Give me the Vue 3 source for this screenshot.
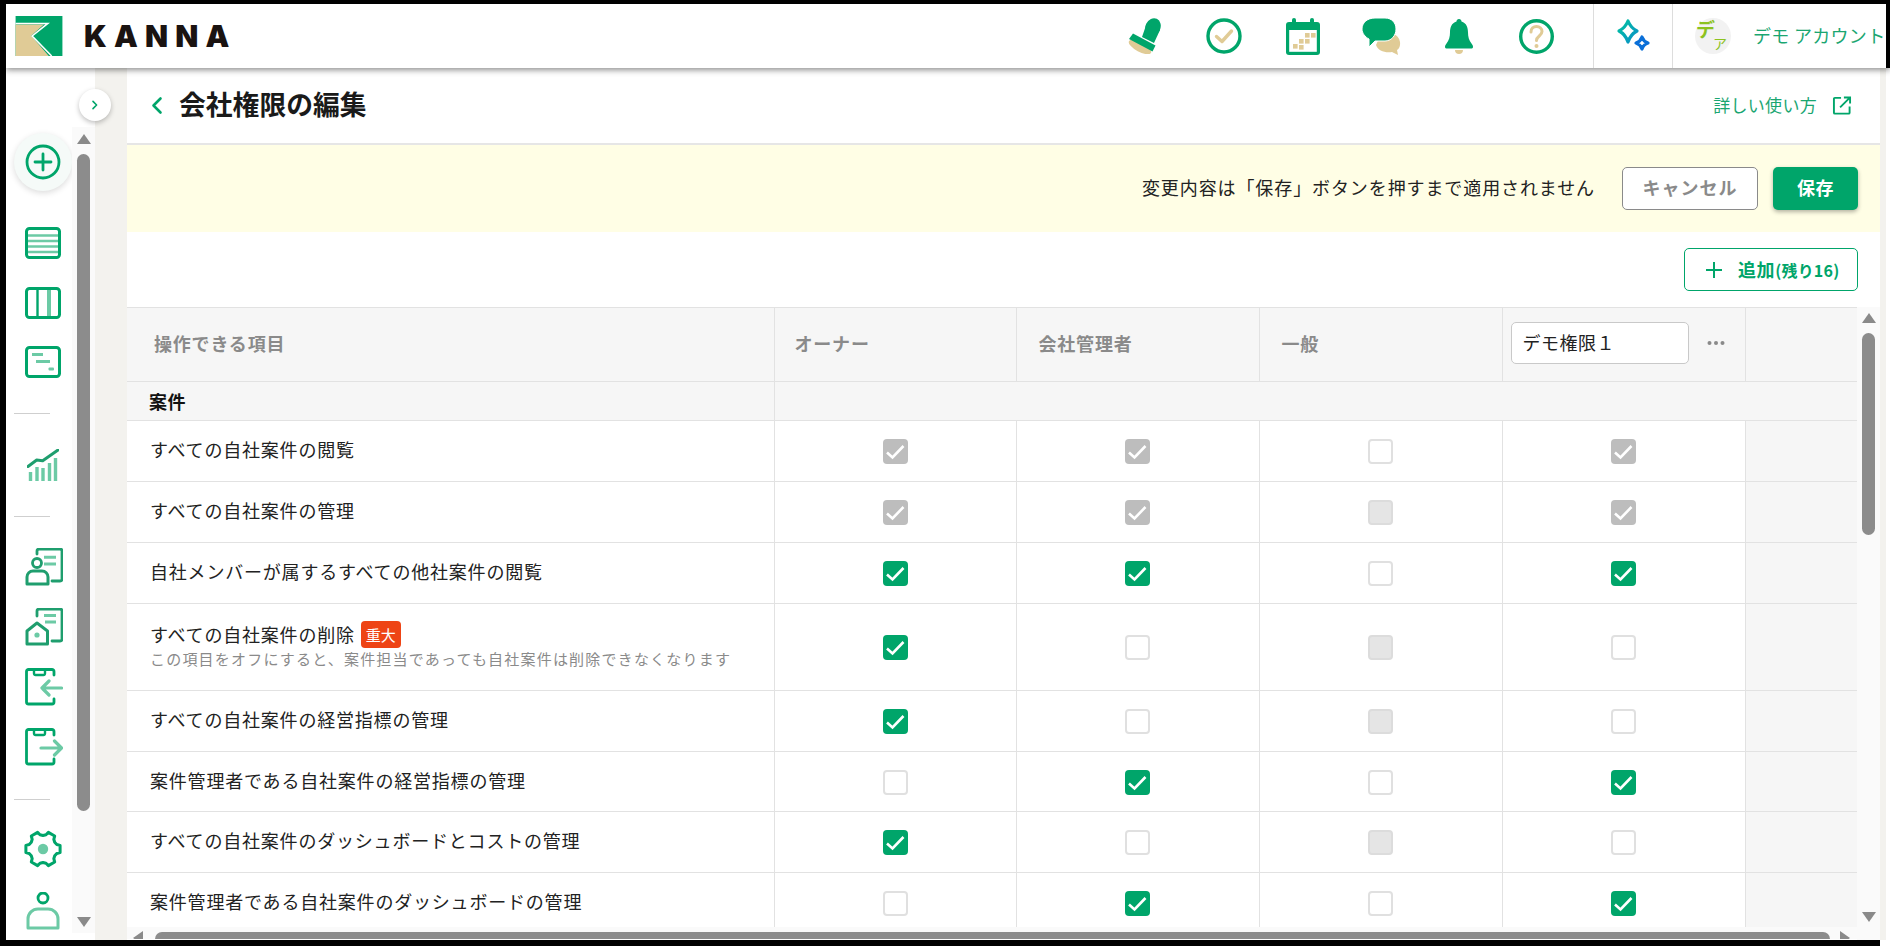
<template>
  <div class="app">
    <header class="header">
      <svg class="logo" viewBox="0 0 48 41" width="48" height="40">
        <rect width="48" height="41" fill="#00a56a" />
        <polygon points="0,8.7 29,8.7 16,20.3 34,41 0,41" fill="#e0cb96" />
        <polyline points="0,7.6 33,7.6 17,20.5 37,41" fill="none" stroke="#fff" stroke-width="1.6" />
      </svg>
      <span class="brand">KANNA</span>
      <div class="header-icons">
        <svg viewBox="0 0 34 36" width="34" height="36">
          <ellipse cx="12" cy="29" rx="12.5" ry="4.800" transform="rotate(28 12 29)" fill="#e0cb96" />
          <ellipse cx="25" cy="9" rx="7.500" ry="9" transform="rotate(25 25 9)" fill="#00a56a" />
          <polygon points="18.500,6 32,12 26,25 14,19" fill="#00a56a" />
          <polygon points="1,21 5,15.500 27.500,27.500 24.500,33.500" fill="#00a56a" />
        </svg>
        <svg class="i-check" viewBox="0 0 36 36" width="36" height="36">
          <circle cx="18" cy="18" r="16" fill="none" stroke="#00a56a" stroke-width="3.400" />
          <polyline points="10.500,18.500 16,23.500 25.500,13" fill="none" stroke="#e0cb96" stroke-width="3.400" stroke-linecap="round" stroke-linejoin="round" />
        </svg>
        <svg class="i-cal" viewBox="0 0 34 37" width="34" height="37">
          <rect x="0" y="4" width="34" height="33" rx="3" fill="#00a56a" />
          <rect x="6" y="0" width="4" height="7" rx="2" fill="#00a56a" />
          <rect x="24" y="0" width="4" height="7" rx="2" fill="#00a56a" />
          <rect x="3.200" y="12" width="27.600" height="21.800" fill="#fff" />
          <rect x="19" y="15" width="4.600" height="4.600" fill="#e0cb96" />
          <rect x="25" y="15" width="4.600" height="4.600" fill="#e0cb96" />
          <rect x="13" y="21" width="4.600" height="4.600" fill="#e0cb96" />
          <rect x="19" y="21" width="4.600" height="4.600" fill="#e0cb96" />
          <rect x="7" y="26" width="4.600" height="4.600" fill="#e0cb96" />
          <rect x="13" y="27" width="4.600" height="4.600" fill="#e0cb96" />
        </svg>
        <svg class="i-chat" viewBox="0 0 39 37" width="39" height="37">
          <path d="M20 14c8 0 17 2 18 10 .5 4-1 7-3 8l1 5-6-3c-7 1-14-1-16-7z" fill="#e0cb96" />
          <path d="M13 0h10c7 0 11 5 11 11 0 7-5 12-11 12H13l-6 6v-8C3 19 0 15 0 11 0 5 5 0 13 0z" fill="#00a56a" stroke="#fff" stroke-width="1" />
        </svg>
        <svg class="i-bell" viewBox="0 0 28 35" width="28" height="35">
          <path d="M14 0c1.500 0 2.500 1 2.500 2.500 5 1.500 6.500 6 6.500 11 0 4 1 8 3.500 11 1 1.500 1.500 2 1.500 3.500 0 1-1 1.500-2 1.500H2c-1 0-2-.5-2-1.500 0-1.500.5-2 1.500-3.500C4 21.500 5 17.500 5 13.500c0-5 1.500-9.500 6.500-11C11.500 1 12.500 0 14 0z" fill="#00a56a" />
          <path d="M10 31h8c0 2.500-1.500 4-4 4s-4-1.500-4-4z" fill="#e0cb96" />
        </svg>
        <svg class="i-help" viewBox="0 0 35 35" width="35" height="35">
          <circle cx="17.500" cy="17.500" r="15.800" fill="none" stroke="#00a56a" stroke-width="3.400" />
          <path d="M12 13c0-3.500 2.500-5.500 5.500-5.500s5.500 2 5.500 5c0 4.500-5.500 4.500-5.500 9" fill="none" stroke="#e0cb96" stroke-width="3" stroke-linecap="round" />
          <circle cx="17.500" cy="27" r="2" fill="#e0cb96" />
        </svg>
      </div>
      <div class="sparkle-cell">
        <svg viewBox="0 0 36 36" width="36" height="36">
          <defs>
            <linearGradient id="sp1" x1="0" y1="0" x2="1" y2="1">
              <stop offset="0" stop-color="#00c2a0" />
              <stop offset="1" stop-color="#0a8fc8" />
            </linearGradient>
          </defs>
          <path d="M13 3c2 5 5 8 9 10-4 2-7 5-9 11-2-6-5-9-9-11 4-2 7-5 9-10z" fill="none" stroke="url(#sp1)" stroke-width="3.200" stroke-linejoin="round" />
          <path d="M27 19c1 3 3 5 6 6-3 1-5 3-6 6-1-3-3-5-6-6 3-1 5-3 6-6z" fill="none" stroke="#0a6fd8" stroke-width="3.200" stroke-linejoin="round" />
        </svg>
      </div>
      <div class="account">
        <div class="avatar">
          <span class="avatar-a">デ</span>
          <span class="avatar-b">ア</span>
        </div>
        <span class="account-name">デモ アカウント</span>
      </div>
    </header>

    <div class="body">
      <button class="toggle">
        <svg viewBox="0 0 10 12" width="8" height="10">
          <polyline points="2.500,1.500 7,6 2.500,10.500" fill="none" stroke="#00a56a" stroke-width="2" stroke-linecap="round" stroke-linejoin="round" />
        </svg>
      </button>

      <nav class="nav">
        <div class="add-btn">
          <svg viewBox="0 0 36 36" width="36" height="36">
            <circle cx="18" cy="18" r="16" fill="none" stroke="#00a56a" stroke-width="2.800" />
            <path d="M18 10v16M10 18h16" fill="none" stroke="#00a56a" stroke-width="2.800" stroke-linecap="round" />
          </svg>
        </div>

        <div class="nav-group first">
          <svg viewBox="0 0 36 32" width="36" height="32">
            <path d="M3 8.500h30M3 14h30M3 19.500h30M3 25h30" stroke="#6ccaa5" stroke-width="2.600" fill="none" />
            <rect x="1.500" y="1.500" width="33" height="29" rx="3" fill="none" stroke="#00a56a" stroke-width="3" />
          </svg>
          <svg viewBox="0 0 36 32" width="36" height="32">
            <path d="M12.500 3v26" stroke="#00a56a" stroke-width="2.400" fill="none" />
            <path d="M24 3v26" stroke="#6ccaa5" stroke-width="4" fill="none" />
            <rect x="1.500" y="1.500" width="33" height="29" rx="3" fill="none" stroke="#00a56a" stroke-width="3" />
          </svg>
          <svg viewBox="0 0 36 32" width="36" height="32">
            <rect x="7" y="7" width="11" height="3" fill="#6ccaa5" />
            <rect x="11" y="14" width="14" height="3" fill="#6ccaa5" />
            <rect x="23.500" y="21.500" width="5.500" height="3" rx="1" fill="#6ccaa5" />
            <rect x="1.500" y="1.500" width="33" height="29" rx="3" fill="none" stroke="#00a56a" stroke-width="3" />
          </svg>
        </div>

        <div class="nav-divider"></div>

        <svg class="nav-chart" viewBox="0 0 32 32" width="32" height="32">
          <path d="M3.500 23v9M10 18v14M16 19v13M22.500 14v18M28.500 9v23" fill="none" stroke="#6ccaa5" stroke-width="3.400" />
          <polyline points="1,17.500 9.700,11 15.700,11.700 31,1" fill="none" stroke="#1f9e6e" stroke-width="3" stroke-linecap="round" stroke-linejoin="round" />
        </svg>

        <div class="nav-divider"></div>

        <div class="nav-group second">
          <svg viewBox="0 0 38 38" width="38" height="38">
            <path d="M12 6V3a2 2 0 0 1 2-2h21a2 2 0 0 1 2 2v28a2 2 0 0 1-2 2h-8" fill="none" stroke="#1f9e6e" stroke-width="2.800" stroke-linecap="round" />
            <path d="M19 9.300h12M19 16h12" fill="none" stroke="#6ccaa5" stroke-width="3" />
            <circle cx="12" cy="15" r="4.500" fill="none" stroke="#1f9e6e" stroke-width="2.800" />
            <path d="M2 36v-7a6 6 0 0 1 6-6h9a6 6 0 0 1 6 6v7z" fill="none" stroke="#1f9e6e" stroke-width="3" stroke-linejoin="round" />
          </svg>
          <svg viewBox="0 0 38 38" width="38" height="38">
            <path d="M12 8V3a2 2 0 0 1 2-2h21a2 2 0 0 1 2 2v28a2 2 0 0 1-2 2h-8" fill="none" stroke="#1f9e6e" stroke-width="2.800" stroke-linecap="round" />
            <path d="M19 7.500h12M20 14h11" fill="none" stroke="#6ccaa5" stroke-width="3" />
            <path d="M2 36V23l10-8 10.500 8v13z" fill="none" stroke="#1f9e6e" stroke-width="3" stroke-linejoin="round" />
            <circle cx="12" cy="27" r="2.600" fill="#6ccaa5" />
          </svg>
          <svg viewBox="0 0 38 38" width="38" height="38">
            <path d="M29 7V3.500a2 2 0 0 0-2-2H3.500a2 2 0 0 0-2 2V34a2 2 0 0 0 2 2H27a2 2 0 0 0 2-2v-3" fill="none" stroke="#00a56a" stroke-width="2.800" stroke-linecap="round" />
            <path d="M9 2v3.500a1.500 1.500 0 0 0 1.500 1.500h8a1.500 1.500 0 0 0 1.500-1.500V2" fill="none" stroke="#00a56a" stroke-width="2.400" />
            <path d="M36.500 20H17M24 13l-7 7 7 7" fill="none" stroke="#6ccaa5" stroke-width="3.200" stroke-linecap="round" stroke-linejoin="round" />
          </svg>
          <svg viewBox="0 0 38 38" width="38" height="38">
            <path d="M29 7V3.500a2 2 0 0 0-2-2H3.500a2 2 0 0 0-2 2V34a2 2 0 0 0 2 2H27a2 2 0 0 0 2-2v-3" fill="none" stroke="#00a56a" stroke-width="2.800" stroke-linecap="round" />
            <path d="M9 2v3.500a1.500 1.500 0 0 0 1.500 1.500h8a1.500 1.500 0 0 0 1.500-1.500V2" fill="none" stroke="#00a56a" stroke-width="2.400" />
            <path d="M16 20h20M29.500 13l7 7-7 7" fill="none" stroke="#6ccaa5" stroke-width="3.200" stroke-linecap="round" stroke-linejoin="round" />
          </svg>
        </div>

        <div class="nav-divider last"></div>

        <svg class="nav-gear" viewBox="0 0 38 38" width="38" height="38">
          <path :d="gearPath" fill="none" stroke="#00a56a" stroke-width="3" stroke-linejoin="round" />
          <circle cx="19" cy="19" r="5.200" fill="#6ccaa5" />
        </svg>

        <svg class="nav-person" viewBox="0 0 34 38" width="34" height="38">
          <circle cx="17" cy="6" r="5" fill="none" stroke="#00a56a" stroke-width="2.800" />
          <path d="M2 36v-9a10 10 0 0 1 10-10h10a10 10 0 0 1 10 10v9z" fill="none" stroke="#6ccaa5" stroke-width="3" stroke-linejoin="round" />
        </svg>
      </nav>

      <div class="nav-scroll">
        <div class="nav-track">
          <span class="arrow-up"></span>
          <span class="nav-thumb"></span>
          <span class="arrow-down"></span>
        </div>
      </div>
      <div class="gutter"></div>

      <main class="main">
        <div class="title-bar">
          <svg class="back" viewBox="0 0 12 18" width="12" height="19">
            <polyline points="9.500,2 2.500,9 9.500,16" fill="none" stroke="#00a56a" stroke-width="2.600" stroke-linecap="round" stroke-linejoin="round" />
          </svg>
          <h1 class="title">会社権限の編集</h1>
          <a class="help-link">詳しい使い方</a>
          <svg class="ext" viewBox="0 0 20 20" width="20" height="19">
            <path d="M9 2H2.500a1 1 0 0 0-1 1v14.500a1 1 0 0 0 1 1H17a1 1 0 0 0 1-1V11" fill="none" stroke="#00a56a" stroke-width="2" />
            <path d="M8 12L18 2M12 1.500h6.500V8" fill="none" stroke="#00a56a" stroke-width="2" />
          </svg>
        </div>

        <div class="notice">
          <span class="notice-text">変更内容は「保存」ボタンを押すまで適用されません</span>
          <button class="btn-cancel">キャンセル</button>
          <button class="btn-save">保存</button>
        </div>

        <div class="toolbar">
          <button class="btn-add">
            <svg viewBox="0 0 18 18" width="18" height="18">
              <path d="M9 1v16M1 9h16" stroke="#00a56a" stroke-width="2" fill="none" />
            </svg>
            <span class="add-label">追加<small>(残り16)</small></span>
          </button>
        </div>

        <div class="table-area">
          <div class="table-col">
            <div class="table-scroll">
              <table class="perm-table">
                <colgroup>
                  <col style="width: 647px" />
                  <col style="width: 242px" />
                  <col style="width: 243px" />
                  <col style="width: 243px" />
                  <col style="width: 243px" />
                  <col />
                </colgroup>
                <thead>
                  <tr class="head-row">
                    <th class="th-first">操作できる項目</th>
                    <th>オーナー</th>
                    <th class="th-wide">会社管理者</th>
                    <th class="th-wide">一般</th>
                    <th class="th-edit">
                      <div class="edit-wrap">
                        <input class="role-input" value="デモ権限１" />
                        <svg viewBox="0 0 18 4" width="18" height="4">
                          <circle cx="2.500" cy="2" r="2" fill="#8a8a8a" />
                          <circle cx="9" cy="2" r="2" fill="#8a8a8a" />
                          <circle cx="15.500" cy="2" r="2" fill="#8a8a8a" />
                        </svg>
                      </div>
                    </th>
                    <th class="th-blank"></th>
                  </tr>
                </thead>
                <tbody>
                  <tr class="section-row">
                    <td class="section-name">案件</td>
                    <td colspan="5"></td>
                  </tr>
                  <tr v-for="row in rows" :key="row.label" :style="{ height: row.h + 'px' }">
                    <td class="label-cell">
                      <div class="label">
                        {{ row.label }}<span v-if="row.badge" class="badge">{{ row.badge }}</span>
                      </div>
                      <div v-if="row.note" class="note">{{ row.note }}</div>
                    </td>
                    <td v-for="(c, i) in row.checks" :key="i" class="check-cell">
                      <span class="check" :class="c">
                        <svg v-if="c === 'on' || c === 'off-on'" viewBox="0 0 25 25" width="25" height="25">
                          <polyline points="4,13.500 9.500,18.500 20.500,7" fill="none" stroke="#fff" stroke-width="2.600" />
                        </svg>
                      </span>
                    </td>
                    <td class="blank-cell"></td>
                  </tr>
                </tbody>
              </table>
            </div>
            <div class="hbar">
              <span class="arrow-left"></span>
              <span class="hbar-thumb"></span>
              <span class="arrow-right"></span>
            </div>
          </div>
          <div class="vbar">
            <span class="arrow-up"></span>
            <span class="vbar-thumb"></span>
            <span class="arrow-down"></span>
          </div>
        </div>
      </main>
      <div class="edge"></div>
    </div>
    <div class="frame-bottom"></div>
  </div>
</template>

<script setup>
// g = グレー表示のチェック済み, e = 未チェック, d = 無効
const G = 'off-on'
const O = 'on'
const E = 'empty'
const D = 'disabled'

const rows = [
  { label: 'すべての自社案件の閲覧', h: 61, checks: [G, G, E, G] },
  { label: 'すべての自社案件の管理', h: 61, checks: [G, G, D, G] },
  { label: '自社メンバーが属するすべての他社案件の閲覧', h: 61, checks: [O, O, E, O] },
  {
    label: 'すべての自社案件の削除',
    h: 87,
    badge: '重大',
    note: 'この項目をオフにすると、案件担当であっても自社案件は削除できなくなります',
    checks: [O, E, D, E]
  },
  { label: 'すべての自社案件の経営指標の管理', h: 61, checks: [O, E, D, E] },
  { label: '案件管理者である自社案件の経営指標の管理', h: 60, checks: [E, O, E, O] },
  { label: 'すべての自社案件のダッシュボードとコストの管理', h: 61, checks: [O, E, D, E] },
  { label: '案件管理者である自社案件のダッシュボードの管理', h: 61, checks: [E, O, E, O] }
]

// 歯車アイコンのアウトラインを計算で作る
function makeGear() {
  let d = ''
  const teeth = 6
  for (let i = 0; i < teeth; i++) {
    const a = (i / teeth) * Math.PI * 2
    const step = (Math.PI * 2) / teeth
    const pts = [
      [13.5, a - step * 0.5],
      [14.5, a - step * 0.3],
      [17.5, a - step * 0.2],
      [17.5, a + step * 0.2],
      [14.5, a + step * 0.3]
    ]
    pts.forEach(([r, t], j) => {
      const x = (19 + r * Math.cos(t)).toFixed(1)
      const y = (19 + r * Math.sin(t)).toFixed(1)
      d += `${i === 0 && j === 0 ? 'M' : 'L'}${x} ${y}`
    })
  }
  return d + 'Z'
}
const gearPath = makeGear()
</script>

<style>
html,
body {
  margin: 0;
  background: #fff;
}
</style>

<style scoped>
.app {
  width: 1890px;
  height: 946px;
  box-sizing: border-box;
  border-top: 4px solid #000;
  border-left: 6px solid #000;
  background: #fff;
  display: flex;
  flex-direction: column;
  overflow: hidden;
  font-family: "Noto Sans CJK JP", "Noto Sans", sans-serif;
  color: #222;
}
.header {
  height: 64px;
  flex-shrink: 0;
  box-sizing: border-box;
  border-right: 4px solid #000;
  display: flex;
  align-items: center;
  padding-left: 9px;
  background: #fff;
  box-shadow: 0 2px 6px rgba(0, 0, 0, 0.45);
  position: relative;
  z-index: 2;
}
.logo {
  margin-bottom: 1px;
}
.brand {
  margin-left: 21px;
  font-family: Inter, "Liberation Sans", sans-serif;
  font-weight: 900;
  font-size: 30px;
  letter-spacing: 7.2px;
  color: #1a1311;
}
.header-icons {
  margin-left: auto;
  display: flex;
  align-items: center;
  margin-right: 39px;
}
.i-check,
.i-cal,
.i-bell {
  margin-left: 44px;
}
.i-chat {
  margin-left: 42px;
}
.i-help {
  margin-left: 46px;
}
.sparkle-cell {
  width: 80px;
  height: 64px;
  box-sizing: border-box;
  border-left: 1px solid #ddd;
  border-right: 1px solid #ddd;
  display: flex;
  align-items: center;
  justify-content: center;
}
.account {
  width: 213px;
  height: 64px;
  overflow: hidden;
  display: flex;
  align-items: center;
  padding-left: 22px;
  box-sizing: border-box;
  flex-shrink: 0;
}
.avatar {
  width: 36px;
  height: 36px;
  flex-shrink: 0;
  border-radius: 50%;
  background: #f2f2f2;
  position: relative;
  color: #8cc21f;
  line-height: 1;
}
.avatar-a {
  position: absolute;
  left: 1px;
  top: 1px;
  font-size: 19px;
  font-weight: 700;
}
.avatar-b {
  position: absolute;
  left: 18px;
  top: 18px;
  font-size: 14px;
}
.account-name {
  margin-left: 22px;
  margin-bottom: 2px;
  font-size: 18px;
  white-space: nowrap;
  color: #1aa671;
  letter-spacing: 0.3px;
}

.body {
  flex: 1;
  display: flex;
  min-height: 0;
  position: relative;
}
.toggle {
  position: absolute;
  left: 73px;
  top: 21px;
  width: 32px;
  height: 32px;
  padding: 0;
  border: 0;
  border-radius: 50%;
  background: #fff;
  box-shadow: 0 2px 5px rgba(0, 0, 0, 0.25);
  display: flex;
  align-items: center;
  justify-content: center;
  z-index: 1;
}
.nav {
  width: 66px;
  flex-shrink: 0;
  box-sizing: border-box;
  padding-top: 65px;
  padding-left: 8px;
  background: #fff;
}
.add-btn {
  width: 58px;
  height: 58px;
  border-radius: 50%;
  background: #f5faf8;
  box-shadow: 0 2px 6px rgba(0, 0, 0, 0.14);
  display: flex;
  align-items: center;
  justify-content: center;
}
.nav-group {
  display: flex;
  flex-direction: column;
  margin-left: 11px;
}
.nav-group.first {
  margin-top: 36px;
  gap: 27.5px;
}
.nav-group.second {
  margin-top: 31px;
  gap: 22px;
}
.nav-divider {
  width: 36px;
  height: 1px;
  background: #cfcfcf;
  margin-top: 35px;
}
.nav-divider.last {
  margin-top: 33px;
}
.nav-chart {
  display: block;
  margin: 35px 0 0 13px;
}
.nav-gear {
  display: block;
  margin: 30px 0 0 10px;
}
.nav-person {
  display: block;
  margin: 24px 0 0 12px;
}
.nav-scroll {
  width: 23px;
  flex-shrink: 0;
  padding-top: 59px;
  box-sizing: border-box;
  background: #fff;
}
.nav-track {
  height: 806px;
  background: #fafafa;
  display: flex;
  flex-direction: column;
  align-items: center;
  padding-top: 7px;
  padding-bottom: 6px;
  box-sizing: border-box;
}
.nav-thumb {
  width: 13px;
  height: 657px;
  margin-top: 10px;
  border-radius: 7px;
  background: #8c8c8c;
}
.nav-track .arrow-down {
  margin-top: auto;
}
.arrow-up {
  width: 0;
  height: 0;
  border-left: 7.5px solid transparent;
  border-right: 7.5px solid transparent;
  border-bottom: 10px solid #8a8a8a;
}
.arrow-down {
  width: 0;
  height: 0;
  border-left: 7.5px solid transparent;
  border-right: 7.5px solid transparent;
  border-top: 10px solid #8a8a8a;
}
.arrow-left {
  width: 0;
  height: 0;
  margin-top: 4px;
  flex-shrink: 0;
  border-top: 7.5px solid transparent;
  border-bottom: 7.5px solid transparent;
  border-right: 10px solid #8a8a8a;
}
.arrow-right {
  width: 0;
  height: 0;
  margin-top: 4px;
  flex-shrink: 0;
  border-top: 7.5px solid transparent;
  border-bottom: 7.5px solid transparent;
  border-left: 10px solid #8a8a8a;
}
.gutter {
  width: 32px;
  flex-shrink: 0;
  background: #f3f2ee;
}
.edge {
  width: 6px;
  flex-shrink: 0;
  background: #f3f2ee;
}
.main {
  width: 1753px;
  flex-shrink: 0;
  display: flex;
  flex-direction: column;
  background: #fff;
  min-height: 0;
}
.title-bar {
  height: 77px;
  flex-shrink: 0;
  box-sizing: border-box;
  border-bottom: 2px solid #e6e6e6;
  display: flex;
  align-items: center;
  padding-left: 24px;
  padding-right: 28px;
}
.back {
  margin-bottom: 1px;
}
.title {
  margin: 0 0 3px 16px;
  font-size: 26.800px;
  font-weight: 700;
  color: #1a1a1a;
  line-height: 1;
}
.help-link {
  margin-left: auto;
  margin-bottom: 2px;
  font-size: 17px;
  letter-spacing: 0.3px;
  color: #1aa671;
}
.ext {
  margin-left: 15px;
}
.notice {
  height: 87px;
  flex-shrink: 0;
  background: #fffee5;
  display: flex;
  align-items: center;
  justify-content: flex-end;
  padding-right: 22px;
}
.notice-text {
  font-size: 18px;
  letter-spacing: 0.9px;
  margin-right: 27px;
  margin-bottom: 3px;
}
button {
  font-family: inherit;
}
.btn-cancel {
  width: 136px;
  height: 43px;
  padding-bottom: 4px;
  box-sizing: border-box;
  border: 1px solid #8a8a8a;
  border-radius: 5px;
  background: #fff;
  color: #8a8a8a;
  font-size: 18px;
  font-weight: 700;
  letter-spacing: 1px;
}
.btn-save {
  width: 85px;
  height: 43px;
  padding-bottom: 4px;
  margin-left: 15px;
  border: 0;
  border-radius: 5px;
  background: #00a56a;
  color: #fff;
  font-size: 18px;
  font-weight: 700;
  letter-spacing: 0.4px;
  box-shadow: 0 2px 4px rgba(0, 0, 0, 0.3);
}
.toolbar {
  height: 75px;
  flex-shrink: 0;
  box-sizing: border-box;
  padding: 16px 22px 0 0;
  display: flex;
  justify-content: flex-end;
}
.btn-add {
  width: 174px;
  height: 43px;
  box-sizing: border-box;
  border: 1px solid #00a56a;
  border-radius: 5px;
  background: #fff;
  display: flex;
  align-items: center;
  padding: 0 0 0 20px;
  color: #00a56a;
  font-size: 18px;
  font-weight: 700;
}
.add-label {
  margin-left: 15px;
  margin-bottom: 2px;
  letter-spacing: 0.6px;
}
.add-label small {
  font-size: 16px;
  letter-spacing: 0.2px;
}
.table-area {
  flex: 1;
  min-height: 0;
  display: flex;
}
.table-col {
  width: 1730px;
  flex-shrink: 0;
  display: flex;
  flex-direction: column;
}
.table-scroll {
  height: 620px;
  overflow: hidden;
  flex-shrink: 0;
}
.perm-table {
  width: 1730px;
  table-layout: fixed;
  border-collapse: collapse;
}
.perm-table th,
.perm-table td {
  border: 1px solid #e2e2e2;
  padding: 0;
  box-sizing: border-box;
}
.perm-table tr > :first-child {
  border-left: 0;
}
.perm-table tr > :last-child {
  border-right: 0;
}
.head-row {
  height: 74px;
}
.head-row th {
  background: #f6f6f6;
  color: #8a8a8a;
  font-size: 18px;
  font-weight: 700;
  text-align: left;
  padding-left: 20px;
  padding-bottom: 3px;
  letter-spacing: 0.8px;
}
.perm-table .th-first {
  padding-left: 27px;
}
.perm-table .th-wide {
  padding-left: 22px;
}
.perm-table .th-edit {
  padding-left: 8px;
}
.edit-wrap {
  display: flex;
  align-items: center;
  gap: 18px;
}
.role-input {
  width: 178px;
  height: 42px;
  box-sizing: border-box;
  border: 1px solid #c9c9c9;
  border-radius: 5px;
  padding: 0 11px 2px;
  background: #fff;
  font-family: inherit;
  font-size: 18px;
  color: #222;
  letter-spacing: 0.5px;
}
.section-row {
  height: 39px;
  background: #f6f6f6;
}
.perm-table .section-name {
  padding-left: 22px;
  padding-bottom: 1px;
  font-size: 18px;
  font-weight: 700;
  color: #111;
  letter-spacing: 0.5px;
}
.section-row td:last-child {
  border-left: 1px solid #e2e2e2;
}
.perm-table .label-cell {
  padding-left: 23px;
  padding-bottom: 3px;
}
.label {
  font-size: 18px;
  letter-spacing: 0.8px;
  line-height: 27px;
  display: flex;
  align-items: center;
}
.badge {
  margin-left: 6px;
  width: 40px;
  height: 27px;
  border-radius: 4px;
  background: #ee4415;
  color: #fff;
  font-size: 15px;
  letter-spacing: 0;
  display: flex;
  align-items: center;
  justify-content: center;
}
.note {
  font-size: 15px;
  letter-spacing: 1.2px;
  line-height: 22px;
  color: #8a8a8a;
}
.perm-table .check-cell {
  text-align: center;
  vertical-align: middle;
  padding-bottom: 1px;
}
.check {
  display: inline-block;
  width: 25px;
  height: 25px;
  box-sizing: border-box;
  border-radius: 4px;
  vertical-align: middle;
}
.check svg {
  display: block;
}
.check.on {
  background: #00a56a;
}
.check.off-on {
  background: #bdbdbd;
}
.check.empty {
  border: 2px solid #e0e0e0;
  background: #fff;
}
.check.disabled {
  border: 2px solid #dcdcdc;
  background: #e5e5e5;
}
.blank-cell,
.th-blank {
  background: #f6f6f6;
}
.hbar {
  height: 12px;
  flex-shrink: 0;
  background: #fafafa;
  overflow: hidden;
  display: flex;
  align-items: flex-start;
  padding-left: 6px;
}
.hbar-thumb {
  width: 1675px;
  height: 20px;
  flex-shrink: 0;
  margin: 5px 10px 0 12px;
  border-radius: 7px;
  background: #8c8c8c;
}
.vbar {
  width: 23px;
  flex-shrink: 0;
  background: #fafafa;
  display: flex;
  flex-direction: column;
  align-items: center;
  padding-top: 6px;
  padding-bottom: 18px;
  box-sizing: border-box;
}
.vbar-thumb {
  width: 13px;
  height: 202px;
  margin-top: 10px;
  border-radius: 7px;
  background: #8c8c8c;
}
.vbar .arrow-down {
  margin-top: auto;
}
.frame-bottom {
  width: 1874px;
  height: 6px;
  flex-shrink: 0;
  background: #000;
}
</style>
